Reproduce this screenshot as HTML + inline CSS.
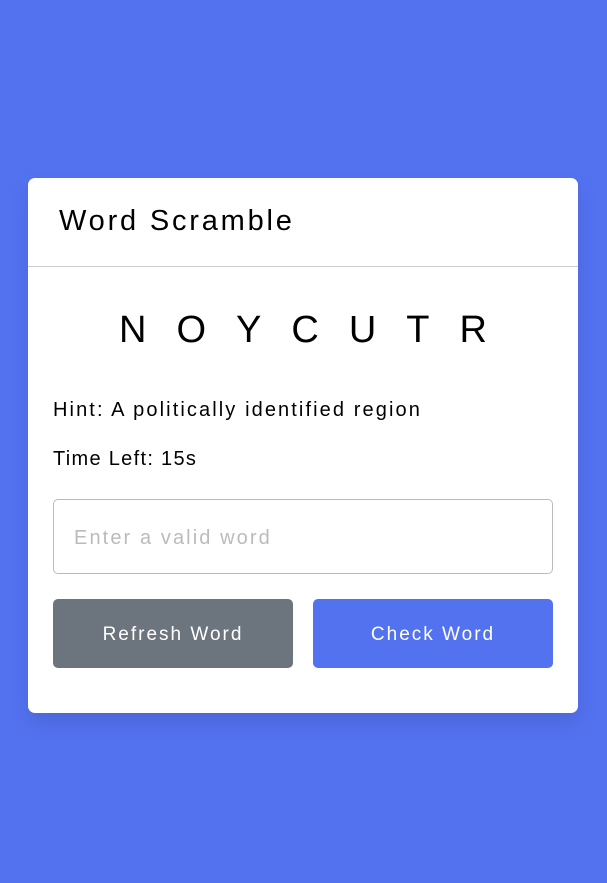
<!DOCTYPE html>
<html><head><meta charset="utf-8"><style>
*{margin:0;padding:0;box-sizing:border-box}
body{width:607px;height:883px;background:#5372F0;font-family:"Liberation Sans",sans-serif;position:relative;overflow:hidden}
.card{position:absolute;left:28px;top:178px;width:550px;height:535px;background:#fff;border-radius:7px;box-shadow:0 10px 20px rgba(0,0,0,0.1)}
h2{position:absolute;left:31px;top:27px;font-size:29px;font-weight:normal;color:#000;letter-spacing:2.8px}
.hr{position:absolute;left:0;top:88px;width:100%;height:1px;background:#ccc}
.word{position:absolute;left:0;top:131px;width:100%;text-align:center;font-size:38px;letter-spacing:30px;padding-left:30px;color:#000}
.p{position:absolute;left:25px;font-size:20px;color:#000}
.inp{position:absolute;left:25px;top:321px;width:500px;height:75px;border:1px solid #bbb;border-radius:5px;padding-left:20px;line-height:76px;font-size:20px;color:#bbb;letter-spacing:2.1px}
.btn{position:absolute;top:421px;width:240px;height:69px;border-radius:5px;color:#fff;font-size:19px;text-align:center;line-height:72px;letter-spacing:2px}
</style></head><body>
<div class="card">
<h2>Word Scramble</h2>
<div class="hr"></div>
<div class="word">NOYCUTR</div>
<div class="p" style="top:221px;letter-spacing:2.1px">Hint: A politically identified region</div>
<div class="p" style="top:270px;letter-spacing:1.3px">Time Left: 15s</div>
<div class="inp">Enter a valid word</div>
<div class="btn" style="left:25px;background:#6C757D">Refresh Word</div>
<div class="btn" style="left:285px;background:#5372F0">Check Word</div>
</div>
</body></html>
